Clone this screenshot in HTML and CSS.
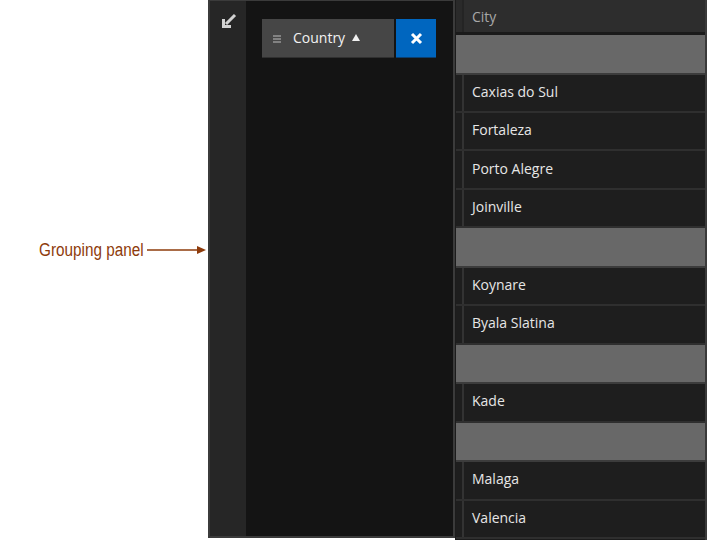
FILE: index.html
```html
<!DOCTYPE html>
<html>
<head>
<meta charset="utf-8">
<link rel="stylesheet" href="styles.css">
</head>
<body>
<div class="page">
  <div class="note">
    <span class="note-text">Grouping panel</span>
    <svg class="note-arrow" width="60" height="10" viewBox="0 0 60 10"><line x1="0" y1="5" x2="52" y2="5" stroke="#8e3b0b" stroke-width="1.5"/><polygon points="50,1 59,5 50,9" fill="#8e3b0b"/></svg>
  </div>
  <div class="panel">
    <div class="strip">
      <svg class="collapse" width="16" height="16" viewBox="0 0 16 16"><path d="M2.5 6 V13.5 H10" fill="none" stroke="#d2d2d2" stroke-width="3"/><path d="M5 11 L14 2" stroke="#d2d2d2" stroke-width="3"/></svg>
    </div>
    <div class="area">
      <div class="chip-row">
        <div class="chip">
          <svg class="grip" width="8" height="8" viewBox="0 0 8 8"><rect x="0" y="0.5" width="8" height="1" fill="#bdbdbd"/><rect x="0" y="3.5" width="8" height="1" fill="#bdbdbd"/><rect x="0" y="6.5" width="8" height="1" fill="#bdbdbd"/></svg>
          <span class="chip-label">Country</span>
          <svg class="sort" width="8" height="7" viewBox="0 0 8 7"><polygon points="4,0 8,7 0,7" fill="#f0f0f0"/></svg>
        </div>
        <div class="close">
          <svg width="13" height="13" viewBox="0 0 13 13"><path d="M2 2 L11 11 M11 2 L2 11" stroke="#fff" stroke-width="3"/></svg>
        </div>
      </div>
    </div>
  </div>
  <div class="grid">
    <div class="head"><div class="indent"></div><div class="cell head-cell">City</div></div>
    <div class="grp"></div>
    <div class="row"><div class="indent"></div><div class="cell">Caxias do Sul</div></div>
    <div class="row"><div class="indent"></div><div class="cell">Fortaleza</div></div>
    <div class="row"><div class="indent"></div><div class="cell">Porto Alegre</div></div>
    <div class="row"><div class="indent"></div><div class="cell">Joinville</div></div>
    <div class="grp"></div>
    <div class="row"><div class="indent"></div><div class="cell">Koynare</div></div>
    <div class="row"><div class="indent"></div><div class="cell">Byala Slatina</div></div>
    <div class="grp"></div>
    <div class="row"><div class="indent"></div><div class="cell">Kade</div></div>
    <div class="grp"></div>
    <div class="row"><div class="indent"></div><div class="cell">Malaga</div></div>
    <div class="row"><div class="indent"></div><div class="cell">Valencia</div></div>
  </div>
</div>
</body>
</html>
```
FILE: styles.css
```css
html, body {
  margin: 0;
  padding: 0;
  background: #ffffff;
}
.page {
  display: flex;
  width: 707px;
  height: 540px;
  overflow: hidden;
}
.note {
  width: 208px;
  flex: none;
  display: flex;
  align-items: center;
  padding-left: 39px;
  box-sizing: border-box;
  padding-bottom: 40px;
}
.note-text {
  font-family: "Liberation Sans", Arial, sans-serif;
  font-size: 18px;
  color: #8e3b0b;
  display: inline-block;
  transform: scaleX(0.85);
  transform-origin: left center;
  width: 104px;
  white-space: nowrap;
  margin-top: 1px;
}
.note-arrow {
  margin-left: 4px;
  display: block;
}
.panel {
  width: 247px;
  height: 538px;
  flex: none;
  box-sizing: border-box;
  border: 2px solid #3b3b3b;
  border-top-width: 1px;
  display: flex;
}
.strip {
  width: 36px;
  flex: none;
  background: #262626;
  display: flex;
  justify-content: center;
  align-items: flex-start;
  padding-top: 12px;
  box-sizing: border-box;
}
.collapse {
  display: block;
  margin-left: 1px;
}
.area {
  flex: 1;
  background: #141414;
  padding: 18px 0 0 16px;
}
.chip-row {
  display: flex;
  gap: 2px;
  height: 39px;
}
.chip {
  width: 132px;
  background: #464646;
  display: flex;
  align-items: center;
  padding-left: 11px;
  box-sizing: border-box;
  border-bottom: 1px solid #303030;
}
.grip {
  display: block;
  margin-top: 1px;
}
.chip-label {
  font-family: "Open Sans", "Noto Sans", sans-serif;
  font-size: 14px;
  color: #f2f2f2;
  margin-left: 12px;
  margin-top: -1px;
}
.sort {
  display: block;
  margin-left: 7px;
  margin-top: -2px;
}
.close {
  width: 40px;
  background: #0066bf;
  display: flex;
  align-items: center;
  justify-content: center;
  border-bottom: 1px solid #0b3f70;
}
.close svg {
  display: block;
}
.grid {
  flex: 1;
  background: #1c1c1c;
  border-left: 1px solid #1c1c1c;
  border-right: 2px solid #3a3a3a;
  display: flex;
  flex-direction: column;
  font-family: "Open Sans", "Noto Sans", sans-serif;
  font-size: 14px;
}
.head {
  height: 35px;
  flex: none;
  display: flex;
  box-sizing: border-box;
  border-bottom: 3px solid #1a1a1a;
  background: #2a2a2a;
}
.indent {
  width: 6px;
  flex: none;
}
.cell {
  flex: 1;
  display: flex;
  align-items: center;
  padding-left: 8px;
  border-left: 2px solid #333333;
  color: #e6e6e6;
  padding-bottom: 3px;
}
.head-cell {
  background: #2d2d2d;
  color: #a8a8a8;
  border-left-color: #242424;
  padding-bottom: 0;
}
.grp {
  height: 39.6px;
  flex: none;
  box-sizing: border-box;
  background: #686868;
  border-bottom: 2px solid #3c3c3c;
}
.row {
  height: 38.4px;
  flex: none;
  box-sizing: border-box;
  display: flex;
  background: #1e1e1e;
  border-bottom: 2px solid #2f2f2f;
}
```
